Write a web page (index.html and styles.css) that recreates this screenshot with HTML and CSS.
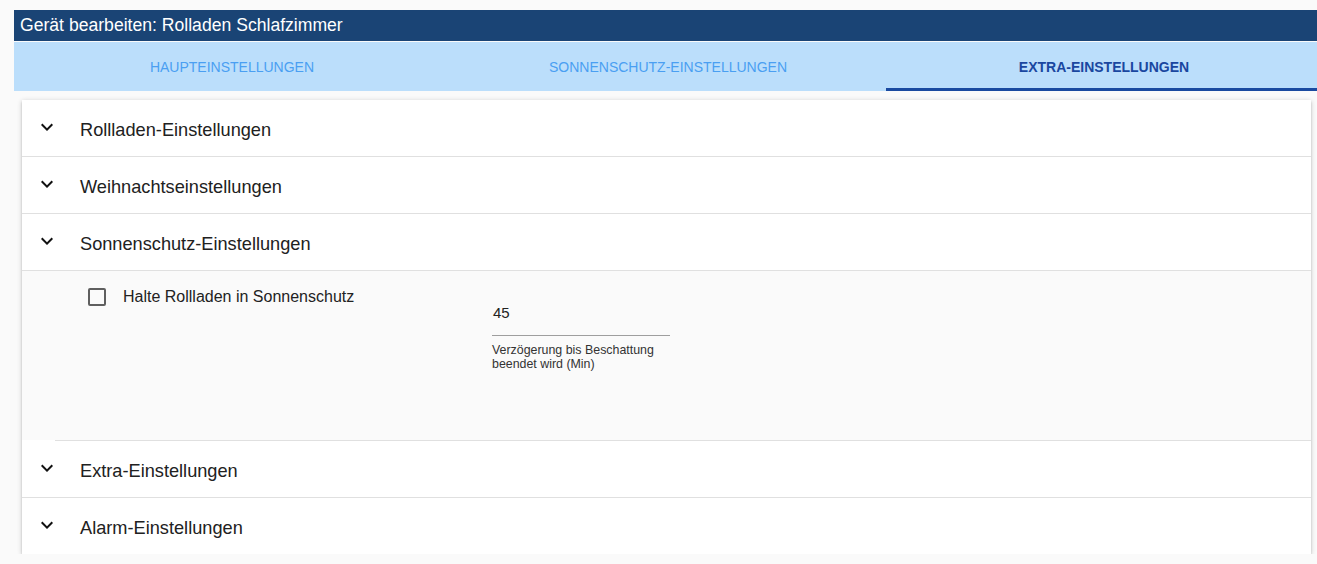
FILE: index.html
```html
<!DOCTYPE html>
<html lang="de">
<head>
<meta charset="utf-8">
<title>Gerät bearbeiten</title>
<link rel="stylesheet" href="styles.css">
</head>
<body>
<div class="dialog">
  <div class="titlebar">Gerät bearbeiten: Rolladen Schlafzimmer</div>
  <div class="tabs">
    <div class="tab">HAUPTEINSTELLUNGEN</div>
    <div class="tab">SONNENSCHUTZ-EINSTELLUNGEN</div>
    <div class="tab active">EXTRA-EINSTELLUNGEN</div>
  </div>
  <div class="content">
    <div class="card">
      <div class="section">
        <div class="header">
          <svg class="chev" viewBox="0 0 24 24" width="24" height="24"><path d="M16.59 8.59L12 13.17 7.41 8.59 6 10l6 6 6-6z"/></svg>
          <span class="htext">Rollladen-Einstellungen</span>
        </div>
      </div>
      <div class="section">
        <div class="header">
          <svg class="chev" viewBox="0 0 24 24" width="24" height="24"><path d="M16.59 8.59L12 13.17 7.41 8.59 6 10l6 6 6-6z"/></svg>
          <span class="htext">Weihnachtseinstellungen</span>
        </div>
      </div>
      <div class="section open">
        <div class="header">
          <svg class="chev" viewBox="0 0 24 24" width="24" height="24"><path d="M16.59 8.59L12 13.17 7.41 8.59 6 10l6 6 6-6z"/></svg>
          <span class="htext">Sonnenschutz-Einstellungen</span>
        </div>
        <div class="body">
          <label class="check">
            <span class="box"></span>
            <span class="clabel">Halte Rollladen in Sonnenschutz</span>
          </label>
          <div class="field">
            <div class="value">45</div>
            <div class="helper">Verzögerung bis Beschattung<br>beendet wird (Min)</div>
          </div>
        </div>
        <div class="divider"></div>
      </div>
      <div class="section">
        <div class="header">
          <svg class="chev" viewBox="0 0 24 24" width="24" height="24"><path d="M16.59 8.59L12 13.17 7.41 8.59 6 10l6 6 6-6z"/></svg>
          <span class="htext">Extra-Einstellungen</span>
        </div>
      </div>
      <div class="section last">
        <div class="header">
          <svg class="chev" viewBox="0 0 24 24" width="24" height="24"><path d="M16.59 8.59L12 13.17 7.41 8.59 6 10l6 6 6-6z"/></svg>
          <span class="htext">Alarm-Einstellungen</span>
        </div>
      </div>
    </div>
  </div>
</div>
</body>
</html>
```
FILE: styles.css
```css
html {
  margin: 0;
  padding: 0;
  background: #fafafa;
  overflow: hidden;
}
body {
  margin: 0;
  padding: 10px 0 0 14px;
  background: #fafafa;
  font-family: "Liberation Sans", Arial, sans-serif;
  color: #212121;
}
.dialog {
  width: 1308px;
}
.titlebar {
  height: 31px;
  line-height: 31px;
  background: #1a4475;
  color: #ffffff;
  font-size: 17.6px;
  padding-left: 6px;
}
.tabs {
  margin-top: 1px;
  height: 49px;
  background: #bbdefb;
  display: grid;
  grid-template-columns: 436px 436px 436px;
}
.tab {
  display: flex;
  align-items: center;
  justify-content: center;
  font-size: 14px;
  color: #4a9ff2;
  box-sizing: border-box;
  padding-top: 1px;
}
.tab.active {
  color: #1a47a0;
  font-weight: bold;
  border-bottom: 3px solid #1a4aa0;
  padding-top: 4px;
}
.content {
  padding: 9px 11px 0 8px;
}
.card {
  background: #ffffff;
  box-shadow: 0 2px 2px 0 rgba(0, 0, 0, 0.14), 0 3px 1px -2px rgba(0, 0, 0, 0.12), 0 1px 5px 0 rgba(0, 0, 0, 0.2);
}
.header {
  height: 56px;
  display: flex;
  align-items: center;
  border-bottom: 1px solid #e0e0e0;
}
.section.last .header {
  border-bottom: none;
}
.chev {
  margin-left: 13px;
  margin-top: -2px;
  fill: #111111;
  flex: none;
}
.htext {
  margin-left: 21px;
  margin-top: 4px;
  font-size: 18.2px;
}
.body {
  background: #fafafa;
  height: 152px;
  padding-top: 17px;
  display: grid;
  grid-template-columns: 404px 178px;
  padding-left: 66px;
  align-items: start;
}
.check {
  display: flex;
  align-items: center;
  height: 20px;
  margin-top: -1px;
}
.box {
  width: 14px;
  height: 14px;
  border: 2px solid #5f5f5f;
  border-radius: 2px;
  flex: none;
}
.clabel {
  margin-left: 17px;
  font-size: 16px;
  color: #222222;
}
.field {
  padding-top: 15px;
}
.value {
  font-size: 15px;
  line-height: 20px;
  padding-left: 1px;
  padding-bottom: 12px;
  border-bottom: 1px solid #9e9e9e;
  color: #222222;
}
.helper {
  margin-top: 7px;
  font-size: 12.4px;
  line-height: 14px;
  color: #333333;
}
.divider {
  background: #ffffff;
  height: 1px;
  position: relative;
}
.divider::after {
  content: "";
  position: absolute;
  left: 33px;
  right: 0;
  top: 0;
  height: 1px;
  background: #e0e0e0;
}
```
